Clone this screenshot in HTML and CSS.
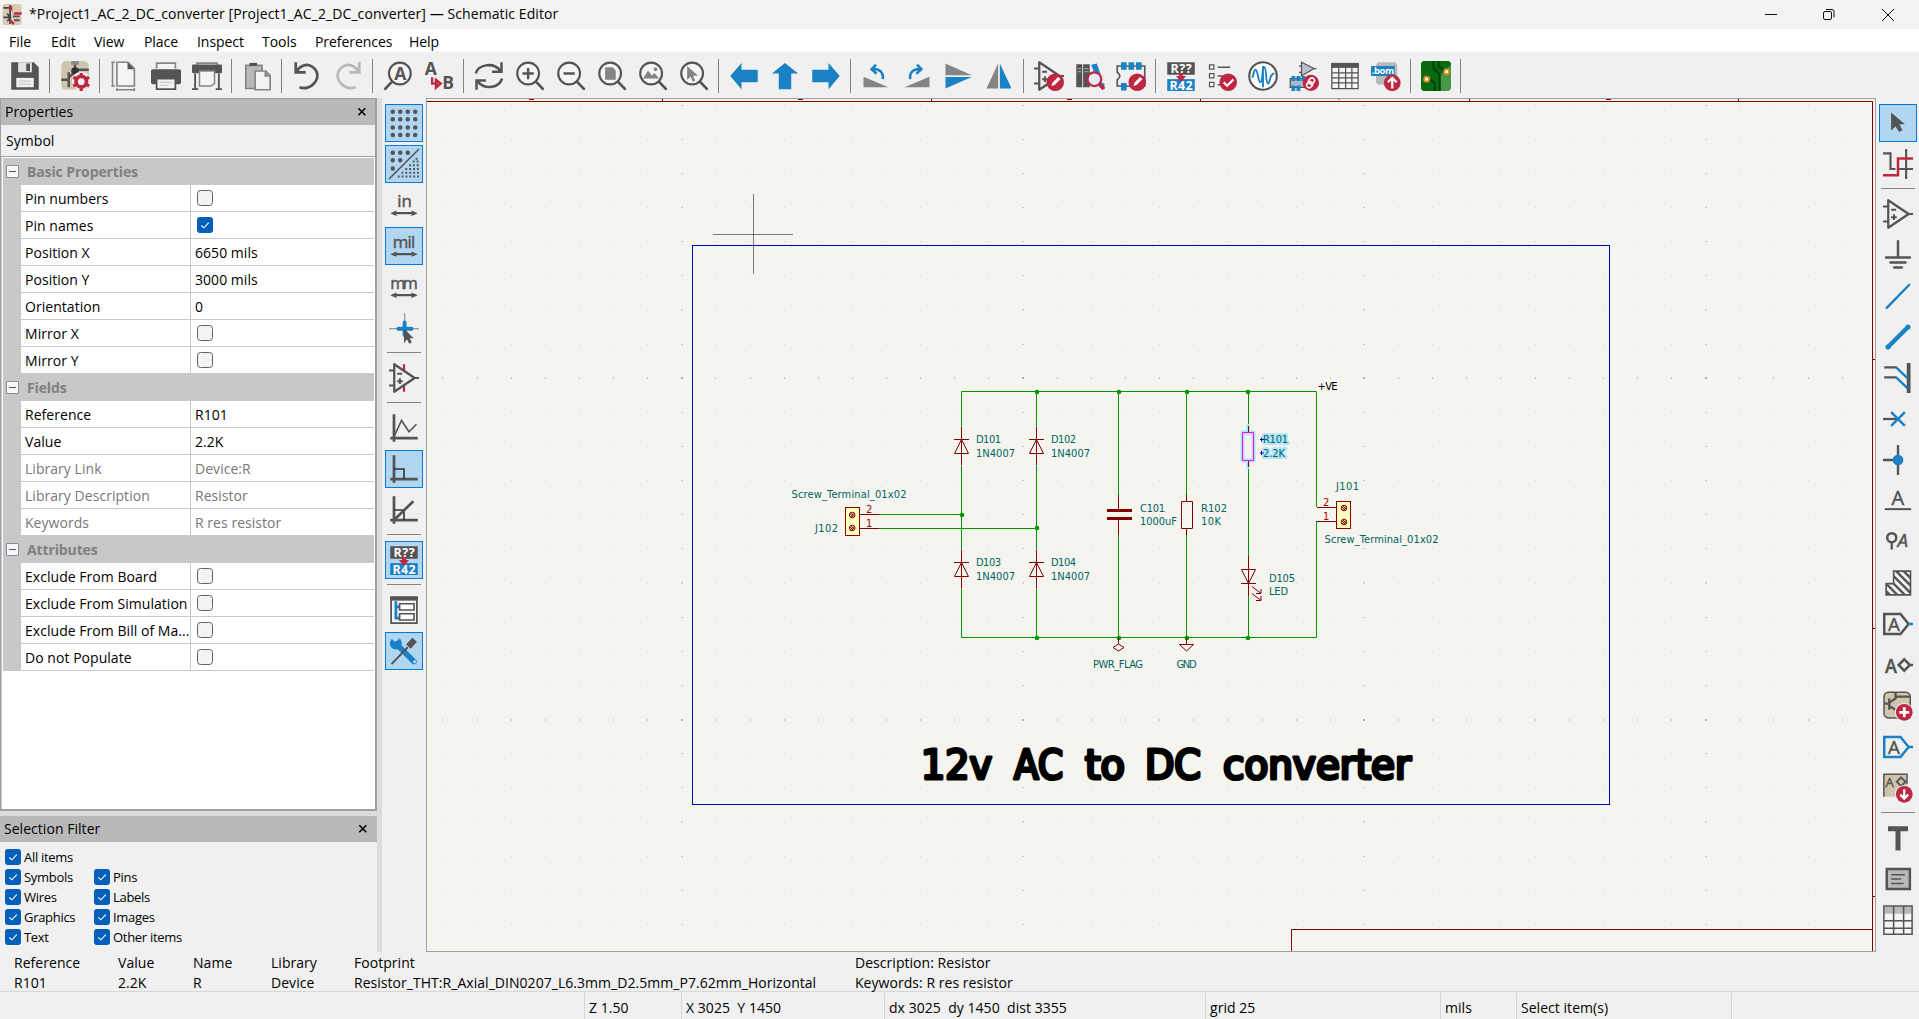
FILE: index.html
```html
<!DOCTYPE html>
<html lang="en">
<head>
<meta charset="utf-8">
<title>Schematic Editor</title>
<link rel="stylesheet" href="styles.css">
</head>
<body>
<svg class="defs" aria-hidden="true">
  <defs>
    <symbol id="lens" viewBox="0 0 24 24"><circle cx="10.5" cy="10" r="8.7" fill="#f5f5f5" stroke="#545454" stroke-width="1.7"/><path d="M16.7 16.5 22.3 22.3" stroke="#545454" stroke-width="2.2" stroke-linecap="round"/></symbol>
    <symbol id="opamp" viewBox="0 0 24 24"><path d="M4.2 1v22L20.5 12z" fill="none" stroke="#545454" stroke-width="1.8" stroke-linejoin="round"/><path d="M0 6h4M0 18h4M20 12h4M6.5 8.5h4M6.5 14.5h4.5M8.75 12.2v4.6" stroke="#545454" stroke-width="1.6"/></symbol>
    <symbol id="pencil" viewBox="0 0 24 24"><circle cx="17" cy="17" r="7" fill="#bf2641"/><path d="m14 20 .7-2.6 4.6-4.6 1.8 1.8-4.6 4.6z" fill="#fff"/></symbol>
    <symbol id="annotate" viewBox="0 0 24 24"><rect x="1" y="1" width="22" height="10" fill="#545454"/><rect x="1" y="14.5" width="22" height="9.5" fill="#1a81c4"/><path d="M10.5 9v3H8l4 5 4-5h-2.5V9z" fill="#bf2641"/><text class="itxt wh" x="3.5" y="9.5" font-size="10" textLength="17">R??</text><text class="itxt wh" x="2.8" y="23" font-size="10" textLength="18.5">R42</text></symbol>
    <symbol id="units" viewBox="0 0 24 24"><path d="M3 18.500h18" stroke="#545454" stroke-width="1.800"/><path d="M1 18.500l5-2.200v4.400zM23 18.500l-5-2.200v4.400z" fill="#545454"/></symbol>
    <symbol id="axis" viewBox="0 0 24 24"><path d="M4 1v22M1 20h22" stroke="#545454" stroke-width="2.200"/></symbol>
    <symbol id="check" viewBox="0 0 16 16"><rect width="16" height="16" rx="3" fill="#005fb8"/><path d="m4.200 8.300 2.600 2.500 5-5.200" fill="none" stroke="#fff" stroke-width="1.100"/></symbol>
    <symbol id="empty" viewBox="0 0 16 16"><rect x=".5" y=".5" width="15" height="15" rx="3" fill="#f3f3f3" stroke="#626262"/></symbol>
    <symbol id="close" viewBox="0 0 10 10"><path d="m1.300 1.300 7 7m0-7-7 7" stroke="#000" stroke-width="1.600"/></symbol>
    <symbol id="transistor" viewBox="0 0 24 24"><rect x="1" y="0" width="22" height="23" rx="4" fill="#d0c4ac"/><path d="M1 15h6M7 9v12M7 13l5-4V1M12 7h11" fill="none" stroke="#545454" stroke-width="2"/></symbol>
    <g id="diode" class="part"><path d="M0-12.500V26.500M-7.500.5h15M0 .5-7 14.500H7z"/></g>
    <g id="screw"><circle r="2.800"/><path d="m-2-1 3 3m-2-4 3.200 3.200m-4 1 4-4"/></g>
  </defs>
</svg>

<div class="app">
  <header class="titlebar">
    <svg class="logo" viewBox="0 0 20 22"><rect width="20" height="22" rx="3" fill="#d8cbb4"/><path d="M1 4h6M8 1v20M1 14h7l-3-4m3 5-3 3" stroke="#444" stroke-width="1.800" fill="none"/><path d="M9 2v5M12 10h8M8 17l4 4" stroke="#c3264a" stroke-width="2.500"/><path d="M11 13h7M12 17h6" stroke="#555" stroke-width="2"/></svg>
    <span class="caption">*Project1_AC_2_DC_converter [Project1_AC_2_DC_converter] — Schematic Editor</span>
    <svg class="winbtns" viewBox="0 0 140 28"><g fill="none" stroke="#111"><path d="M5 13.500h12"/><rect x="63.500" y="10.500" width="8" height="8" rx="1.500"/><path d="M66 8.500h6q2 0 2 2v6"/><path d="m122 8 12 12m0-12-12 12"/></g></svg>
  </header>

  <nav class="menubar"><span>File</span><span>Edit</span><span>View</span><span>Place</span><span>Inspect</span><span>Tools</span><span>Preferences</span><span>Help</span></nav>

  <div class="toolbar">
    <span class="tool"><svg viewBox="0 0 24 24"><path d="M1 1h18l4 4v18H1z" fill="#545454"/><path d="M5 13.500h14V21H5z" fill="#f0f0f0"/><path d="M6.500 1h11v8h-11z" fill="#e4e4e4"/><path d="M13 2h3v6h-3z" fill="#545454"/><path d="M7 16h10M7 18.500h10" stroke="#ccc"/></svg></span>
    <i class="sep"></i>
    <span class="tool"><svg viewBox="0 0 24 24"><use href="#transistor"/><circle cx="12" cy="8" r="3" fill="#333"/><path d="M9 0h6v3H9z" fill="#888"/><circle cx="17" cy="16" r="7.500" fill="#f0f0f0"/><circle cx="17" cy="16.500" r="4.200" fill="none" stroke="#bf2641" stroke-width="3"/><path d="M17 9.500v3m0 8V24m-6.300-11 2.800 1.500m7 4 2.800 1.500m0-7-2.800 1.500m-7 4-2.800 1.500" stroke="#bf2641" stroke-width="2.600"/></svg></span>
    <i class="sep"></i>
    <span class="tool"><svg viewBox="0 0 24 24"><path d="M5.500 1h9l5 5v14h-14z" fill="#f5f5f5" stroke="#848484" stroke-width="1.300"/><path d="M14 1v5.500h5.500z" fill="#545454"/><path d="M1 1h3M1 20h3M2 1v19M5 23h15M5.500 21.500v2.500M19.500 21.500v2.500" stroke="#848484" stroke-width="1.200" fill="none"/></svg></span>
    <span class="tool"><svg viewBox="0 0 24 24"><path d="M4.500 6V1.700h15V6" fill="#f3f3f3" stroke="#848484" stroke-width="1.400"/><rect y="6.500" width="24" height="12" rx="1.500" fill="#545454"/><path d="M4.500 14h15v8.500h-15z" fill="#f3f3f3" stroke="#545454" stroke-width="1.400"/><path d="M7 17h10M7 19.500h7" stroke="#ccc"/></svg></span>
    <span class="tool"><svg viewBox="0 0 24 24"><path d="M4 3V1.700h16V3" fill="none" stroke="#848484" stroke-width="1.400"/><rect y="2.800" width="24" height="7" rx="1" fill="#545454"/><path d="M6 8h12v10l-3 2H6z" fill="#f5f5f5" stroke="#848484" stroke-width="1.200"/><path d="M2.500 10v13M21.500 10v13M0 22.500h5M19 22.500h5" stroke="#545454" stroke-width="1.500"/></svg></span>
    <i class="sep"></i>
    <span class="tool"><svg viewBox="0 0 24 24"><path d="M3 3.500h13V22H3z" fill="#b9b9b9" stroke="#848484" stroke-width="1.300"/><path d="M6 4V1.500h6V4z" fill="#545454"/><path d="M10.500 8h8.500l3.500 3.500V23h-12z" fill="#f3f3f3" stroke="#848484" stroke-width="1.300"/><path d="M18 8v4.500h4.500z" fill="#848484"/></svg></span>
    <i class="sep"></i>
    <span class="tool"><svg viewBox="0 0 24 24"><path d="M3 1v8h8M4 8C7 3 12 2 16 4.500c5 3 5.500 9 2 13C15 21.500 10 22.500 6 21" fill="none" stroke="#545454" stroke-width="2.200"/></svg></span>
    <span class="tool"><svg viewBox="0 0 24 24"><path d="M21 1v8h-8M20 8C17 3 12 2 8 4.500c-5 3-5.500 9-2 13C9 21.500 14 22.500 18 21" fill="none" stroke="#b9b9b9" stroke-width="2.200"/></svg></span>
    <i class="sep"></i>
    <span class="tool"><svg viewBox="0 0 24 24"><g transform="matrix(-1 0 0 1 24 0)"><use href="#lens"/></g><text class="itxt" x="8.900" y="15.200" font-size="14">A</text></svg></span>
    <span class="tool"><svg viewBox="0 0 24 24"><text class="itxt" x=".5" y="11" font-size="14">A</text><text class="itxt" x="14.500" y="22.500" font-size="14">B</text><path d="M6.500 13v5h5M9.500 15l4 3-4 3.500z" fill="none" stroke="#bf2641" stroke-width="1.800"/></svg></span>
    <i class="sep"></i>
    <span class="tool"><svg viewBox="0 0 24 24"><path d="M1.500 10C3 3 15 .5 21 7.500M22 1v7.500h-7.500M22.500 14C20 21.500 9 23.500 3 16.500M2 23v-7.500h7.500" fill="none" stroke="#545454" stroke-width="2"/></svg></span>
    <span class="tool"><svg viewBox="0 0 24 24"><use href="#lens"/><path d="M6 10h9M10.500 5.500v9" stroke="#545454" stroke-width="2"/></svg></span>
    <span class="tool"><svg viewBox="0 0 24 24"><use href="#lens"/><path d="M6 10h9" stroke="#545454" stroke-width="2"/></svg></span>
    <span class="tool"><svg viewBox="0 0 24 24"><use href="#lens"/><path d="M6.500 5h6l2.500 2.500V15H6.500z" fill="#848484"/></svg></span>
    <span class="tool"><svg viewBox="0 0 24 24"><use href="#lens"/><path d="m4 14 4-6.500 3 4 2-2 4 4.500z" fill="#848484"/><circle cx="14" cy="6.500" r="1.500" fill="#848484"/></svg></span>
    <span class="tool"><svg viewBox="0 0 24 24"><use href="#lens"/><path d="M6.500 4v11l2.800-2.500 1.700 4 2-1-1.700-3.700h4z" fill="#848484"/></svg></span>
    <i class="sep"></i>
    <span class="tool"><svg viewBox="0 0 24 24"><path d="M1 12 10 1.500V7h13v10H10v5.500z" fill="#1a81c4"/></svg></span>
    <span class="tool"><svg viewBox="0 0 24 24"><path d="M12 1.500 22.500 10H17v12.500H7V10H1.500z" fill="#1a81c4"/></svg></span>
    <span class="tool"><svg viewBox="0 0 24 24"><path d="M23 12 14 1.500V7H1v10h13v5.500z" fill="#1a81c4"/></svg></span>
    <i class="sep"></i>
    <span class="tool"><svg viewBox="0 0 24 24"><path d="M2 12.500V21h20z" fill="#848484"/><path d="M17.500 14.500c.5-6-3-8.500-9-8M12 3 8.500 6.500l4 3.700" fill="none" stroke="#1a81c4" stroke-width="2"/></svg></span>
    <span class="tool"><svg viewBox="0 0 24 24"><path d="M22 12.500V21H2z" fill="#848484"/><path d="M6.500 14.500c-.5-6 3-8.500 9-8M12 3l3.500 3.500-4 3.700" fill="none" stroke="#1a81c4" stroke-width="2"/></svg></span>
    <span class="tool"><svg viewBox="0 0 24 24"><path d="M2 2v9.300h21z" fill="#848484"/><path d="M2 22v-9.300h21z" fill="#1a81c4"/></svg></span>
    <span class="tool"><svg viewBox="0 0 24 24"><path d="M2 22h9.300V2z" fill="#848484"/><path d="M22 22h-9.300V2z" fill="#1a81c4"/></svg></span>
    <i class="sep"></i>
    <span class="tool"><svg viewBox="0 0 24 24"><use href="#opamp"/><use href="#pencil"/></svg></span>
    <span class="tool"><svg viewBox="0 0 24 24"><path d="M1 2.500h4.800V21H1zM6.500 2.500h5.300V21H6.500z" fill="#545454"/><path d="M2 6h2.800M2 8.500h2.800M7.500 6h3.200M7.500 8.500h3.200" stroke="#999"/><path d="m13 3 4.500-1 3 9-4 2zM20 17l3.500 1v5z" fill="#1a81c4"/><circle cx="15.500" cy="14.500" r="5.500" fill="#e2edf5" stroke="#bf2641" stroke-width="1.800"/><path d="m19.500 18.500 3.500 4" stroke="#bf2641" stroke-width="3"/></svg></span>
    <span class="tool"><svg viewBox="0 0 24 24"><path d="M1 4v5q4 3 0 6v5h22V4z" fill="none" stroke="#545454" stroke-width="1.300"/><path d="M4 1h4.500v6H4zM10 1h4.500v6H10zM16 1h4.500v6H16zM4 17.500h4.500v6H4z" fill="#1a81c4"/><use href="#pencil"/></svg></span>
    <i class="sep"></i>
    <span class="tool"><svg viewBox="0 0 24 24"><use href="#annotate"/></svg></span>
    <span class="tool"><svg viewBox="0 0 24 24"><path d="M2 3h3.500v3.500H2zM2 10h3.500v3.500H2zM2 17h3.500v3.500H2z" fill="#fff" stroke="#545454"/><path d="M8.500 5h10M8.500 12h7M8.500 19h4" stroke="#545454" stroke-width="1.200"/><circle cx="17" cy="17" r="7" fill="#bf2641"/><path d="m13.300 17 2.800 2.800 5-5" fill="none" stroke="#fff" stroke-width="1.800"/></svg></span>
    <span class="tool"><svg viewBox="0 0 24 24"><circle cx="12" cy="12" r="11" fill="#fff" stroke="#545454" stroke-width="1.700"/><path d="M3 13c2 0 1-6 3-6s2 10 4 10 1-12 3-12 1 13 3 13 1-8 5-8M12 4v17" fill="none" stroke="#1a81c4" stroke-width="1.500"/></svg></span>
    <span class="tool"><svg viewBox="0 0 24 24"><path d="M10 1v11l10-6z" fill="#b9c0cc" stroke="#545454"/><path d="M8 4h2M8 9h2M20 6h2M1 14h12v7H1z" fill="#a9bac8" stroke="#545454"/><path d="M2 12h3v4H2zM6 12h3v4H6zM10 12h3v4h-3zM2 19.500h3V24H2zM6 19.500h3V24H6z" fill="#1a81c4"/><circle cx="17.500" cy="17.500" r="6.500" fill="#bf2641"/><g fill="none" stroke="#fff" stroke-width="1.300"><rect x="16" y="13.500" width="4" height="5" rx="2" transform="rotate(45 18 16)"/><rect x="14.500" y="16.500" width="4" height="5" rx="2" transform="rotate(45 16.500 19)"/></g></svg></span>
    <span class="tool"><svg viewBox="0 0 24 24"><path d="M1.500 2h21v20h-21z" fill="#f5f5f5" stroke="#545454"/><path d="M1 1.500h22v4H1z" fill="#545454"/><path d="M1.500 9.500h21M1.500 13.500h21M1.500 17.500h21M7 5v17M12.500 5v17M17.500 5v17" stroke="#545454"/></svg></span>
    <span class="tool"><svg viewBox="0 0 24 24"><rect x="4" y="1" width="17" height="18" rx="3" fill="#b9b9b9"/><path d="M0 4h19v8H0z" fill="#1a81c4"/><text class="itxt wh" x=".5" y="10.700" font-size="7.500" textLength="18">.bom</text><circle cx="17" cy="17.500" r="6.700" fill="#bf2641"/><path d="M17 22v-8M13.500 17l3.500-3.500 3.500 3.500" fill="none" stroke="#fff" stroke-width="1.800"/></svg></span>
    <i class="sep"></i>
    <span class="tool"><svg viewBox="0 0 24 24"><rect width="24" height="24" rx="3" fill="#489648"/><path d="M3 0h18q3 0 3 3l-9 9v12H3q-3 0-3-3V3q0-3 3-3z" fill="#0a6a12"/><path d="M3 15h5l3 3v6M10 0v6l5 5v13M14 0v4l5 4" fill="none" stroke="#013d06" stroke-width="1.500"/><circle cx="4.500" cy="14.500" r="2" fill="#fff" stroke="#e38b1c" stroke-width="1.500"/><circle cx="20.500" cy="8.500" r="2" fill="#fff" stroke="#e38b1c" stroke-width="1.500"/></svg></span>
    <i class="sep"></i>
  </div>

  <main class="workspace">
    <aside class="dock">
      <section class="properties">
        <div class="pane-title"><span>Properties</span><svg class="x"><use href="#close"/></svg></div>
        <div class="subject">Symbol</div>
        <div class="grid">
          <div class="cat">Basic Properties</div>
          <div class="row"><span>Pin numbers</span><span><svg class="cb"><use href="#empty"/></svg></span></div>
          <div class="row"><span>Pin names</span><span><svg class="cb"><use href="#check"/></svg></span></div>
          <div class="row"><span>Position X</span><span>6650 mils</span></div>
          <div class="row"><span>Position Y</span><span>3000 mils</span></div>
          <div class="row"><span>Orientation</span><span>0</span></div>
          <div class="row"><span>Mirror X</span><span><svg class="cb"><use href="#empty"/></svg></span></div>
          <div class="row"><span>Mirror Y</span><span><svg class="cb"><use href="#empty"/></svg></span></div>
          <div class="cat">Fields</div>
          <div class="row"><span>Reference</span><span>R101</span></div>
          <div class="row"><span>Value</span><span>2.2K</span></div>
          <div class="row ro"><span>Library Link</span><span>Device:R</span></div>
          <div class="row ro"><span>Library Description</span><span>Resistor</span></div>
          <div class="row ro"><span>Keywords</span><span>R res resistor</span></div>
          <div class="cat">Attributes</div>
          <div class="row"><span>Exclude From Board</span><span><svg class="cb"><use href="#empty"/></svg></span></div>
          <div class="row"><span>Exclude From Simulation</span><span><svg class="cb"><use href="#empty"/></svg></span></div>
          <div class="row"><span>Exclude From Bill of Ma...</span><span><svg class="cb"><use href="#empty"/></svg></span></div>
          <div class="row"><span>Do not Populate</span><span><svg class="cb"><use href="#empty"/></svg></span></div>
        </div>
      </section>
      <section class="filter">
        <div class="pane-title"><span>Selection Filter</span><svg class="x"><use href="#close"/></svg></div>
        <div class="filters">
          <label class="all"><svg class="cb"><use href="#check"/></svg>All items</label>
          <label><svg class="cb"><use href="#check"/></svg>Symbols</label><label><svg class="cb"><use href="#check"/></svg>Pins</label>
          <label><svg class="cb"><use href="#check"/></svg>Wires</label><label><svg class="cb"><use href="#check"/></svg>Labels</label>
          <label><svg class="cb"><use href="#check"/></svg>Graphics</label><label><svg class="cb"><use href="#check"/></svg>Images</label>
          <label><svg class="cb"><use href="#check"/></svg>Text</label><label><svg class="cb"><use href="#check"/></svg>Other items</label>
        </div>
      </section>
    </aside>

    <div class="vbar left">
      <span class="btn on"><svg viewBox="0 0 24 24"><path d="M3 3h20M3 9h20M3 15.500h20M3 21.500h20" stroke="#545454" stroke-width="3.600" stroke-linecap="round" stroke-dasharray="0 6"/></svg></span>
      <span class="btn on"><svg viewBox="0 0 24 24"><path d="M3 3h14M3 9h8M3 15.500h2" stroke="#545454" stroke-width="3.600" stroke-linecap="round" stroke-dasharray="0 6"/><path d="M0 24 24 0" stroke="#545454" stroke-width="1.300"/><path d="M22 7v2M19 10h5M16 13h8M13 16h11M10 19h14M7 22h17" stroke="#545454" stroke-width="1.500" stroke-dasharray="1.500 1.600"/></svg></span>
      <span class="btn"><svg viewBox="0 0 24 24"><text class="itxt rg" x="6.500" y="13.300" font-size="13.500">in</text><use href="#units"/></svg></span>
      <span class="btn on"><svg viewBox="0 0 24 24"><text class="itxt rg" x="3" y="13.300" font-size="13.500" textLength="18">mil</text><use href="#units"/></svg></span>
      <span class="btn"><svg viewBox="0 0 24 24"><text class="itxt rg" x="1" y="13.300" font-size="13" textLength="22">mm</text><use href="#units"/></svg></span>
      <span class="btn"><svg viewBox="0 0 24 24"><path d="M0 12.500h24M12.500 0v24" stroke="#999"/><path d="M7.500 12.500h10.500M12.500 7.500v10" stroke="#1a81c4" stroke-width="3.200" stroke-linecap="round"/><path d="M12 12.500v11l2.500-2.300 1.700 3.300 2-1-1.600-3.300h3.200z" fill="#545454"/></svg></span>
      <i class="hsep"></i>
      <span class="btn"><svg viewBox="0 0 24 24"><path d="M12 1v22" stroke="#bf2641" stroke-width="1.800"/><path d="M4.200 2v20L20 12z" fill="#f0f0f0"/><use href="#opamp"/></svg></span>
      <i class="hsep"></i>
      <span class="btn"><svg viewBox="0 0 24 24"><use href="#axis"/><path d="m4 19 6-13 6 9 6-6" fill="none" stroke="#545454" stroke-width="1.300"/></svg></span>
      <span class="btn on"><svg viewBox="0 0 24 24"><use href="#axis"/><path d="M4 12h8v8" fill="none" stroke="#333" stroke-width="1.300"/></svg></span>
      <span class="btn"><svg viewBox="0 0 24 24"><use href="#axis"/><path d="M4 12h8v8" fill="none" stroke="#333" stroke-width="1.300"/><path d="M4 20 19.500 5" stroke="#545454" stroke-width="2.200"/></svg></span>
      <i class="hsep"></i>
      <span class="btn on"><svg viewBox="0 0 24 24"><use href="#annotate"/></svg></span>
      <i class="hsep"></i>
      <span class="btn"><svg viewBox="0 0 24 24"><path d="M1.700 2h20.600v20.500H1.700z" fill="#f5f5f5" stroke="#545454" stroke-width="1.400"/><path d="M1 1h22v3.500H1z" fill="#545454"/><path d="M5.500 5v13.500H9M5.500 9.500H9" fill="none" stroke="#1a81c4" stroke-width="2.200"/><path d="M8.500 7h11.500v5H8.500zM8.500 15h11.500v5H8.500z" fill="#fff" stroke="#545454" stroke-width="1.300"/></svg></span>
      <span class="btn on"><svg viewBox="0 0 24 24"><path d="M5 5.500 20 20.500" stroke="#1a81c4" stroke-width="4.500" stroke-linecap="round"/><circle cx="5.500" cy="6" r="4.800" fill="#1a81c4"/><path d="M4.500 4.500 0 0 5-1.500 8 3z" fill="#b1d6f2"/><circle cx="20.500" cy="20.500" r="1.300" fill="#b1d6f2"/><path d="M2 22.500 15 9" stroke="#545454" stroke-width="1.600"/><path d="m15.500 8.500 5-5.500" stroke="#545454" stroke-width="5"/></svg></span>
    </div>

    <svg class="canvas" viewBox="427 99 1448 852">
      <rect x="427" y="99" width="1448" height="852" fill="#f5f4ef"/>
      <g class="dots">
        <path d="M442.400 105.500H1871M442.400 139.500H1871M442.400 173.500H1871M442.400 207.500H1871M442.400 241.500H1871M442.400 275.500H1871M442.400 310.500H1871M442.400 344.500H1871M442.400 412.500H1871M442.400 446.500H1871M442.400 480.500H1871M442.400 514.500H1871M442.400 548.500H1871M442.400 583.500H1871M442.400 617.500H1871M442.400 651.500H1871M442.400 685.500H1871M442.400 753.500H1871M442.400 787.500H1871M442.400 822.500H1871M442.400 856.500H1871M442.400 890.500H1871M442.400 924.500H1871"/>
        <path class="fifth" d="M442.400 378H1871M442.400 720H1871M682 104.660V950M1023 104.660V950M1364 104.660V950M1706 104.660V950"/>
      </g>
      <path d="M681 377h2v2h-2zM1022 377h2v2h-2zM1363 377h2v2h-2zM1705 377h2v2h-2zM681 719h2v2h-2zM1022 719h2v2h-2zM1363 719h2v2h-2zM1705 719h2v2h-2z" fill="#b0b0ad"/>
      <g class="sheet"><path d="M427 101.500H1872.500V951M1291.500 951V929.500H1872.500M662.500 99v2M931.500 99v2M1200.500 99v2M1469.500 99v2M1738.500 99v2M1873 359.500h2M1873 628.500h2M1873 896.500h2M529 99.500h5M798 99.500h5M1067 99.500h5M1338.500 99.500h1M1606 99.500h5"/></g>
      <rect x="692.500" y="245.500" width="917" height="559" class="box"/>
      <path class="wire" d="M961.500 426V391.500H1316.500V507M961.500 466V549M961.500 589V637.500H1316.500V521M1036.500 391v35M1036.500 466v83M1036.500 589v48M879 514.500h82.500M879 528.500h157.500M1118.500 391v104M1118.500 535v102M1186.500 391v104M1186.500 535v102M1248.500 391v35M1248.500 467v89M1248.500 596v41"/>
      <g class="junction"><circle cx="1037" cy="392" r="2.300"/><circle cx="1119" cy="392" r="2.300"/><circle cx="1187" cy="392" r="2.300"/><circle cx="1248" cy="392" r="2.300"/><circle cx="962" cy="515" r="2.300"/><circle cx="1037" cy="528" r="2.300"/><circle cx="1037" cy="638" r="2.300"/><circle cx="1119" cy="638" r="2.300"/><circle cx="1187" cy="638" r="2.300"/><circle cx="1248" cy="638" r="2.300"/></g>
      <use href="#diode" x="961.500" y="439"/><use href="#diode" x="1036.500" y="439"/><use href="#diode" x="961.500" y="562"/><use href="#diode" x="1036.500" y="562"/>
      <path class="halo" d="M1248 426v6M1248 461v6M1242.500 432.500h11v28h-11z"/>
      <g class="part">
        <rect x="845.500" y="507.500" width="14" height="28" fill="#ffffc2"/><rect x="1336.500" y="501.500" width="14" height="27" fill="#ffffc2"/>
        <use href="#screw" x="852.200" y="515"/><use href="#screw" x="852.200" y="528"/><use href="#screw" x="1344" y="508"/><use href="#screw" x="1344" y="522"/>
        <path d="M860 514.500h19M860 528.500h19M1317 507.500h19M1317 521.500h19"/>
        <path d="M1118.500 495v14M1118.500 520v15M1186.500 495v6M1186.500 529v6M1181.500 501.500h11v27h-11zM1248.500 426v6M1248.500 461v6"/>
        <path d="M1107 510.500h25M1107 518.500h25" stroke-width="3"/>
        <path d="M1248.500 556v40M1241 583.500h15M1241.500 569.500h14l-7 14zM1252 586.500l9 7m-5 0h5v-4.500M1252 593.500l9 7m-5 0h5v-4.500"/>
        <path d="M1118.500 638v6l-5.500 3.500 5.500 3.500 5.500-3.500-5.500-3.500M1186.500 638v6.500M1179.500 644.500h14l-7 6.500z"/>
      </g>
      <path d="M1242.500 432.500h11v28h-11z" fill="none" stroke="#f0f"/>
      <g class="halo txt"><text x="1263" y="443.500" textLength="25">R101</text><text x="1263" y="457.500" textLength="22">2.2K</text></g>
      <path d="M1260 439.500h4M1261.500 437.500v4M1260 453h4M1261.500 451v4" stroke="#0000c8"/>
      <g class="txt">
        <text x="1263" y="443.500" textLength="25">R101</text><text x="1263" y="457.500" textLength="22">2.2K</text>
        <text x="976" y="443.500" textLength="25">D101</text><text x="976" y="457.500" textLength="39">1N4007</text>
        <text x="1051" y="443.500" textLength="25">D102</text><text x="1051" y="457.500" textLength="39">1N4007</text>
        <text x="976" y="566.500" textLength="25">D103</text><text x="976" y="580.500" textLength="39">1N4007</text>
        <text x="1051" y="566.500" textLength="25">D104</text><text x="1051" y="580.500" textLength="39">1N4007</text>
        <text x="791.500" y="498.500" textLength="115">Screw_Terminal_01x02</text><text x="815" y="532.500" textLength="23">J102</text>
        <text x="1140" y="512.500" textLength="25">C101</text><text x="1140" y="525.500" textLength="37">1000uF</text>
        <text x="1201" y="512.500" textLength="26">R102</text><text x="1201" y="525.500" textLength="20">10K</text>
        <text x="1269" y="582.500" textLength="26">D105</text><text x="1269" y="595.500" textLength="19">LED</text>
        <text x="1336" y="490.500" textLength="23">J101</text><text x="1324.500" y="543.500" textLength="114">Screw_Terminal_01x02</text>
        <text x="1093" y="668.500" textLength="50">PWR_FLAG</text><text x="1176.500" y="668.500" textLength="20">GND</text>
        <text class="blk" x="1317.500" y="390.500" textLength="20">+VE</text>
      </g>
      <g class="txt pin"><text x="866" y="513.500">2</text><text x="866" y="527.500">1</text><text x="1323" y="506.500">2</text><text x="1323" y="520.500">1</text></g>
      <g class="headline"><text x="921" y="778.500" textLength="71" lengthAdjust="spacingAndGlyphs">12v</text><text x="1014" y="778.500" textLength="49" lengthAdjust="spacingAndGlyphs">AC</text><text x="1085" y="778.500" textLength="40" lengthAdjust="spacingAndGlyphs">to</text><text x="1145" y="778.500" textLength="56" lengthAdjust="spacingAndGlyphs">DC</text><text x="1223" y="778.500" textLength="188" lengthAdjust="spacingAndGlyphs">converter</text></g>
      <path d="M713 234.500h80M753.500 194v80" stroke="#000" stroke-opacity=".5"/>
    </svg>

    <div class="vbar right">
      <span class="btn on"><svg viewBox="0 0 24 24"><path d="M6.500 3.500v14.500l3.600-3.300 2.800 4.500 2.700-1.500-2.500-4.700h4.400z" fill="#545454"/></svg></span>
      <span class="btn"><svg viewBox="0 0 24 24"><path d="M0 3.500h6V16h4M12 16h12M18.500 0v24" fill="none" stroke="#545454" stroke-width="1.700"/><path d="M0 21h12V7.500h12" fill="none" stroke="#bf2641" stroke-width="2"/></svg></span>
      <i class="hsep"></i>
      <span class="btn"><svg viewBox="0 0 24 24"><use href="#opamp"/></svg></span>
      <span class="btn"><svg viewBox="0 0 24 24"><path d="M12 1v13M2.500 14h19" stroke="#545454" stroke-width="2" stroke-linecap="round"/><path d="M6 18h12M9 22h6" stroke="#545454" stroke-width="2" stroke-linecap="round"/></svg></span>
      <span class="btn"><svg viewBox="0 0 24 24"><path d="M3 21.500 21 3" stroke="#1a81c4" stroke-width="1.900" stroke-linecap="round"/></svg></span>
      <span class="btn"><svg viewBox="0 0 24 24"><path d="M4 20 20 4" stroke="#1a81c4" stroke-width="3.500" stroke-linecap="round"/><circle cx="4" cy="20" r="2" fill="#1a81c4"/><circle cx="20" cy="4" r="2" fill="#1a81c4"/></svg></span>
      <span class="btn"><svg viewBox="0 0 24 24"><path d="M1 3.500h10M1 11.500h10" stroke="#545454" stroke-width="1.900"/><path d="M20.500 0v24" stroke="#545454" stroke-width="3"/><path d="m10.500 3.500 9.500 9M10.500 11.500l9.500 9" stroke="#1a81c4" stroke-width="1.900"/></svg></span>
      <span class="btn"><svg viewBox="0 0 24 24"><path d="M0 12h12" stroke="#545454" stroke-width="1.800"/><path d="m6.500 6.500 11 11m0-11-11 11" stroke="#1a81c4" stroke-width="2"/></svg></span>
      <span class="btn"><svg viewBox="0 0 24 24"><path d="M0 12h12M12 0v24" stroke="#545454" stroke-width="1.900"/><circle cx="12" cy="12" r="4.300" fill="#1a81c4"/></svg></span>
      <span class="btn"><svg viewBox="0 0 24 24"><text class="itxt rg" x="6.800" y="15.500" font-size="16">A</text><path d="M1.500 18.500h21" stroke="#545454" stroke-width="1.600"/></svg></span>
      <span class="btn"><svg viewBox="0 0 24 24"><circle cx="7" cy="8.500" r="3.600" fill="none" stroke="#545454" stroke-width="2"/><path d="M7 12v6" stroke="#545454" stroke-width="1.800"/><text class="itxt rg it" x="11.500" y="16.200" font-size="15">A</text></svg></span>
      <span class="btn"><svg viewBox="0 0 24 24"><clipPath id="area"><path d="M8.500 2.500h13.500v19h-19.500v-9h6z"/></clipPath><path d="M-2 14 10 26M2 12l12 12M4 8l15 15M5 3l20 20M9 1l16 16M14 0l10 10" stroke="#545454" stroke-width="1.900" clip-path="url(#area)"/><path d="M8.500 2.500h13.500v19h-19.500v-9h6z" fill="none" stroke="#545454" stroke-width="1.300"/></svg></span>
      <span class="btn"><svg viewBox="0 0 24 24"><path d="M1 4h13l6.500 8-6.500 8H1z" fill="none" stroke="#545454" stroke-width="2"/><path d="M20 12h4" stroke="#1a81c4" stroke-width="2"/><text class="itxt rg" x="4" y="17.500" font-size="15">A</text></svg></span>
      <span class="btn"><svg viewBox="0 0 24 24"><text class="itxt rg hv" x="1.500" y="18" font-size="16" textLength="9.500" lengthAdjust="spacingAndGlyphs">A</text><path d="m17 7.500 4.500 4.500-4.500 4.500-4.500-4.500zM21 12h3" fill="none" stroke="#545454" stroke-width="2"/></svg></span>
      <span class="btn"><svg viewBox="0 0 24 24"><rect x=".8" y="1" width="21" height="20.500" rx="3.500" fill="#d0c4ac" stroke="#545454" stroke-width="1.200"/><path d="M1 10h5M5 6v9M5 9.500l5-3.500V1M10 4.500h12M5 12l5 3" fill="none" stroke="#545454" stroke-width="1.800"/><circle cx="17" cy="17" r="7.500" fill="#f0f0f0"/><circle cx="17" cy="17" r="6.700" fill="#bf2641"/><path d="M13 17h8M17 13v8" stroke="#fff" stroke-width="2.200"/></svg></span>
      <span class="btn"><svg viewBox="0 0 24 24"><path d="M1 4h13l6.500 8-6.500 8H1z" fill="none" stroke="#1a81c4" stroke-width="2"/><path d="M20 12h4" stroke="#1a81c4" stroke-width="2"/><text class="itxt rg" x="4" y="17.500" font-size="15">A</text></svg></span>
      <span class="btn"><svg viewBox="0 0 24 24"><path d="M.7 19V1h18.500v18z" fill="#d0c4ac"/><path d="M.7 19V1h18.500v8" fill="none" stroke="#545454" stroke-width="1.200"/><text class="itxt rg" x="2" y="11" font-size="10.500">A</text><path d="m14.500 3.500 3.500 3.500-3.500 3.500-3.500-3.500z" fill="none" stroke="#545454" stroke-width="1.500"/><circle cx="17" cy="17" r="7.500" fill="#f0f0f0"/><circle cx="17" cy="17" r="6.700" fill="#bf2641"/><path d="M17 13v7.500M13.800 17.300l3.200 3.200 3.200-3.200" fill="none" stroke="#fff" stroke-width="1.800"/></svg></span>
      <i class="hsep"></i>
      <span class="btn"><svg viewBox="0 0 24 24"><path d="M4 2.500h16v4h-6v15.500h-4V6.500H4z" fill="#545454"/></svg></span>
      <span class="btn"><svg viewBox="0 0 24 24"><rect x="3" y="4" width="18.500" height="16" fill="#b9b9b9" stroke="#545454" stroke-width="2"/><path d="M6.500 8.500h11M6.500 12h8M6.500 15.500h10" stroke="#545454" stroke-width="1.200"/></svg></span>
      <span class="btn"><svg viewBox="0 0 24 24"><path d="M.7.700h22.600v22.600H.7z" fill="#f5f5f5"/><path d="M1 1h22v6H1z" fill="#b9b9b9"/><path d="M.7.700h22.600v22.600H.7zM.7 12.500h22.600M.7 18.500h22.600M8.500.700v22.600M16.500.700v22.600" fill="none" stroke="#545454" stroke-width="1.200"/></svg></span>
    </div>
  </main>

  <section class="message">
    <div>Reference<br>R101</div><div>Value<br>2.2K</div><div>Name<br>R</div><div>Library<br>Device</div><div>Footprint<br>Resistor_THT:R_Axial_DIN0207_L6.3mm_D2.5mm_P7.62mm_Horizontal</div><div>Description: Resistor<br>Keywords: R res resistor</div>
  </section>
  <footer class="status"><span></span><span>Z 1.50</span><span>X 3025&nbsp; Y 1450</span><span>dx 3025&nbsp; dy 1450&nbsp; dist 3355</span><span>grid 25</span><span>mils</span><span>Select item(s)</span><span></span></footer>
</div>
</body>
</html>
```
FILE: styles.css
```css
* { box-sizing: border-box; }
body { margin: 0; overflow: hidden; background: #f0f0f0; color: #000; font: 14px/20px "Open Sans", "Noto Sans", sans-serif; letter-spacing: .04px; }
svg { display: block; }
.defs { position: absolute; width: 0; height: 0; }
.app { width: 1919px; height: 1019px; display: flex; flex-direction: column; white-space: nowrap; }

.titlebar { height: 29px; background: #f3f3f3; display: flex; align-items: center; padding-left: 2px; }
.logo { width: 20px; height: 21px; margin-right: 7px; }
.caption { flex: 1; letter-spacing: .09px; padding-bottom: 1px; }
.winbtns { width: 140px; height: 28px; margin-right: 19px; }

.menubar { height: 23px; background: #fff; display: grid; grid-template-columns: 42px 43px 50px 53px 65px 53px 94px auto; padding-left: 9px; line-height: 25px; letter-spacing: -.05px; }

.toolbar { height: 46px; display: flex; padding: 3px 0 2px 4px; }
.tool { width: 41px; display: grid; place-items: center; }
.tool svg, .btn svg { width: 30px; height: 30px; overflow: visible; }
.sep { width: 9px; display: flex; justify-content: center; align-items: center; }
.sep::before { content: ""; width: 1px; height: 34px; background: #848484; }
.itxt { font-family: "Open Sans", sans-serif; font-weight: 700; fill: #545454; letter-spacing: 0; }
.itxt.rg { font-weight: 400; stroke: #545454; stroke-width: .35; }
.itxt.hv { font-weight: 600; }
.itxt.it { font-style: italic; }
.itxt.wh { fill: #fff; }

.workspace { height: 854px; display: flex; }
.dock { width: 382px; background: #dcdcdc; padding-right: 5px; display: flex; flex-direction: column; gap: 5px; }
.properties { height: 713px; border: 1px solid #a0a0a0; border-right-width: 2px; border-bottom-width: 2px; background: #f0f0f0; display: flex; flex-direction: column; }
.pane-title { height: 26px; background: #b9b9b9; display: flex; justify-content: space-between; align-items: center; padding: 0 8px 0 4px; }
.filter .pane-title { padding-right: 9px; }
.x { width: 10px; height: 10px; }
.subject { height: 32px; padding: 6px 5px; border-bottom: 1px solid #a0a0a0; }
.grid { flex: 1; background: #fff; padding: 1px 1px 0 1px; border-left: 1px solid #c8c8c8; }
.cat { height: 27px; background: #c8c8c8; color: #808080; font-weight: 700; line-height: 27px; padding-left: 3px; display: flex; align-items: center; gap: 8px; letter-spacing: -.12px; }
.cat::before { content: ""; width: 11px; height: 11px; border: 1px solid #8c8c8c; border-radius: 1px; background: linear-gradient(#3c5aa0, #3c5aa0) center / 7px 1px no-repeat #f8f8f8; }
.row { height: 27px; display: grid; grid-template-columns: 169px 1fr; border-left: 18px solid #c8c8c8; line-height: 27px; }
.row span { border-bottom: 1px solid #c8c8c8; padding-left: 4px; height: 27px; overflow: hidden; }
.row span + span { border-left: 1px solid #c8c8c8; }
.row .cb { margin: 5px 0 0 2px; }
.ro { color: #787878; }
.cb { width: 16px; height: 16px; flex: none; }
.filter { flex: 1; background: #f0f0f0; }
.filters { display: grid; grid-template-columns: 89px 120px; grid-auto-rows: 20px; padding: 5px 0 0 5px; font-size: 13px; letter-spacing: -.3px; }
.filters label { display: flex; align-items: center; gap: 3px; }
.filters .all { grid-column: span 2; }

.vbar { display: flex; flex-direction: column; padding: 4px 3px 0; }
.vbar.left { width: 44px; }
.vbar.right { width: 43px; padding-left: 3px; }
.btn { width: 38px; height: 38px; margin: 1.5px 0; display: grid; place-items: center; flex: none; }
.btn.on { background: #b1d6f2; border: 1px solid #0078d7; }
.hsep { height: 9px; flex: none; width: 34px; margin-left: 2px; background: linear-gradient(#848484, #848484) center / 100% 1px no-repeat; }

.canvas { width: 1450px; height: 854px; border: 1px solid #a0a0a0; flex: none; }
.dots { fill: none; stroke: #d2d2ce; stroke-dasharray: 1 33.13; shape-rendering: crispEdges; }
.dots .fifth { stroke: #c8c8c4; stroke-width: 2; }
.sheet path { fill: none; stroke: #840000; }
.box { fill: none; stroke: #0000c2; }
.wire { fill: none; stroke: #009600; }
.junction { fill: #009600; }
.part { fill: none; stroke: #840000; }
.halo { fill: none; stroke: #b1e4fa; stroke-width: 4; stroke-linejoin: round; stroke-linecap: round; }
.txt { font: 11px "DejaVu Sans Condensed", "DejaVu Sans", sans-serif; font-stretch: condensed; letter-spacing: 0; transform: translateY(-.5px); }
.txt:not(.halo) { fill: #006464; }
.txt .blk { fill: #000; }
.txt.pin { fill: #a90000; }
.headline { font: 41px "DejaVu Sans Condensed", "DejaVu Sans", sans-serif; font-stretch: condensed; letter-spacing: 0; fill: #000; stroke: #000; stroke-width: 3.2; stroke-linejoin: round; }

.message { height: 40px; display: grid; grid-template-columns: 104px 75px 78px 83px 501px auto; padding: 1px 0 0 14px; line-height: 19.5px; border-bottom: 1px solid #d7d7d7; }
.status { height: 27px; display: grid; grid-template-columns: 584px 97px 203px 321px 235px 76px 215px auto; line-height: 29px; padding-top: 1px; }
.status span { padding-left: 4px; }
.status span + span { border-left: 1px solid #d7d7d7; }
```
